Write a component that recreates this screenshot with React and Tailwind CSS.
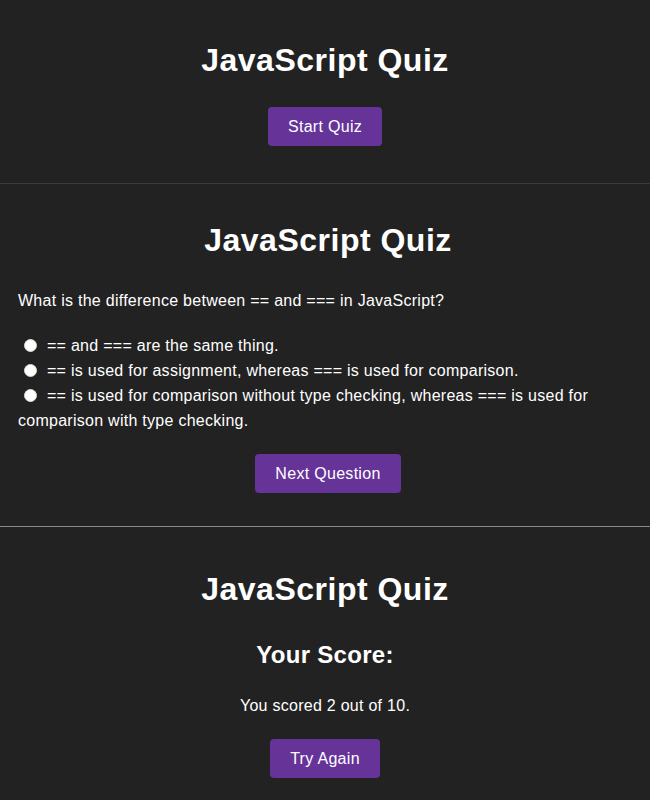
export default function App() {
  const btn =
    "inline-flex h-[39px] items-center justify-center rounded-[4px] bg-[#663399] px-5 text-[16px] tracking-[0.3px] text-white";
  const h1 = "text-center text-[32px] font-bold leading-[37px] tracking-[0.5px] text-white";
  const options = [
    "== and === are the same thing.",
    "== is used for assignment, whereas === is used for comparison.",
    "== is used for comparison without type checking, whereas === is used for comparison with type checking.",
  ];
  return (
    <div
      className="min-h-[800px] w-[650px] bg-[#222222] text-white"
      style={{ fontFamily: '"Liberation Sans", Arial, sans-serif' }}
    >
      {/* Section 1 */}
      <section className="flex flex-col items-center pt-[42px] pb-[37px]">
        <h1 className={h1}>JavaScript Quiz</h1>
        <button className={btn + " mt-[28px]"}>Start Quiz</button>
      </section>
      <div className="h-px bg-[#3c3c3c]" />

      {/* Section 2 */}
      <section className="flex flex-col pl-[18px] pr-[12px] pt-[38px] pb-[33px]">
        <h1 className={h1}>JavaScript Quiz</h1>
        <p className="mt-[29px] text-[16px] leading-[25px] tracking-[0.27px]">
          What is the difference between == and === in JavaScript?
        </p>
        <div className="mt-[20px] flex flex-col">
          {options.map((o) => (
            <label key={o} className="block text-[16px] leading-[25px] tracking-[0.27px]">
              <span className="ml-[6px] mr-[10px] inline-block h-[13px] w-[13px] rounded-full border border-[#dcdcdc] bg-white align-[-1px]" />
              {o}
            </label>
          ))}
        </div>
        <div className="mt-[21px] flex justify-center">
          <button className={btn}>Next Question</button>
        </div>
      </section>
      <div className="h-px bg-[#8a8a8a]" />

      {/* Section 3 */}
      <section className="flex flex-col items-center pt-[44px] pb-[22px]">
        <h1 className={h1}>JavaScript Quiz</h1>
        <h2 className="mt-[33px] text-[24px] font-bold leading-[28px] tracking-[0.3px]">Your Score:</h2>
        <p className="mt-[28px] text-[16px] leading-[18px] tracking-[0.27px]">You scored 2 out of 10.</p>
        <button className={btn + " mt-[24px]"}>Try Again</button>
      </section>
    </div>
  );
}
